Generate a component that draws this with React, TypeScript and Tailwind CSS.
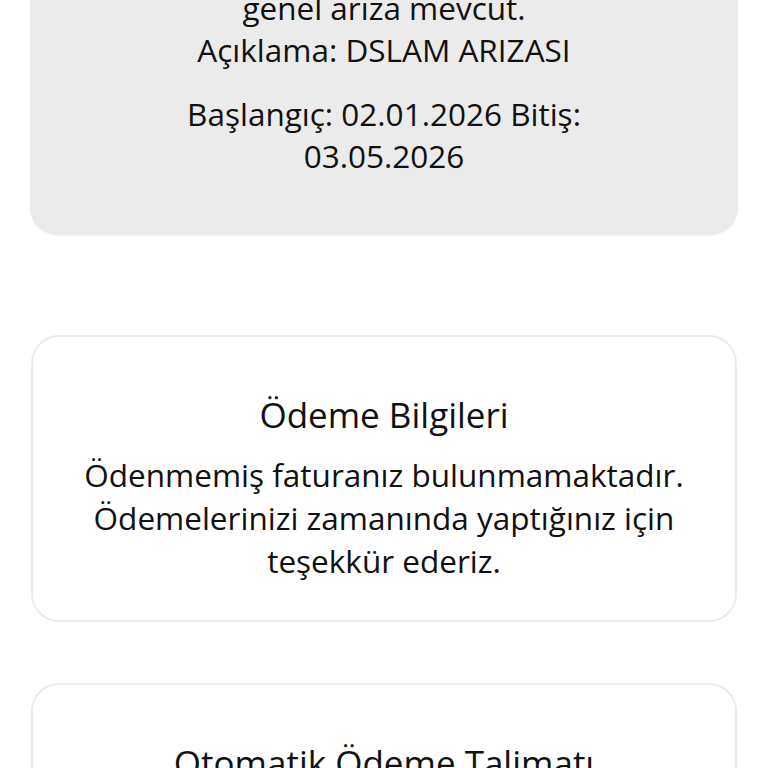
export default function App() {
  return (
    <div className="h-[768px] overflow-hidden bg-white font-['Open_Sans',sans-serif] text-[#111]">
      <div className="-mt-[13px] mx-[30px] rounded-b-[28px] bg-[#ecebeb] px-[96px] pb-[58px] text-center text-[31.5px] leading-[42px] shadow-[0_1px_2px_rgba(0,0,0,0.06)]">
        <p>genel arıza mevcut.</p>
        <p>Açıklama: DSLAM ARIZASI</p>
        <p className="mt-[22px]">Başlangıç: 02.01.2026 Bitiş: 03.05.2026</p>
      </div>

      <div className="mx-[31px] mt-[100px] rounded-[28px] border-[2.5px] border-[#ebebeb] px-[36px] pb-[38px] pt-[55px] text-center">
        <h2 className="text-[35px] leading-[45px]">Ödeme Bilgileri</h2>
        <p className="mt-[16px] text-[31.5px] leading-[43px]">
          Ödenmemiş faturanız bulunmamaktadır. Ödemelerinizi zamanında yaptığınız için teşekkür ederiz.
        </p>
      </div>

      <div className="mx-[31px] mt-[61px] rounded-[28px] border-[2.5px] border-[#ebebeb] px-[36px] pb-[38px] pt-[55px] text-center">
        <h2 className="text-[35px] leading-[45px]">Otomatik Ödeme Talimatı</h2>
      </div>
    </div>
  );
}
